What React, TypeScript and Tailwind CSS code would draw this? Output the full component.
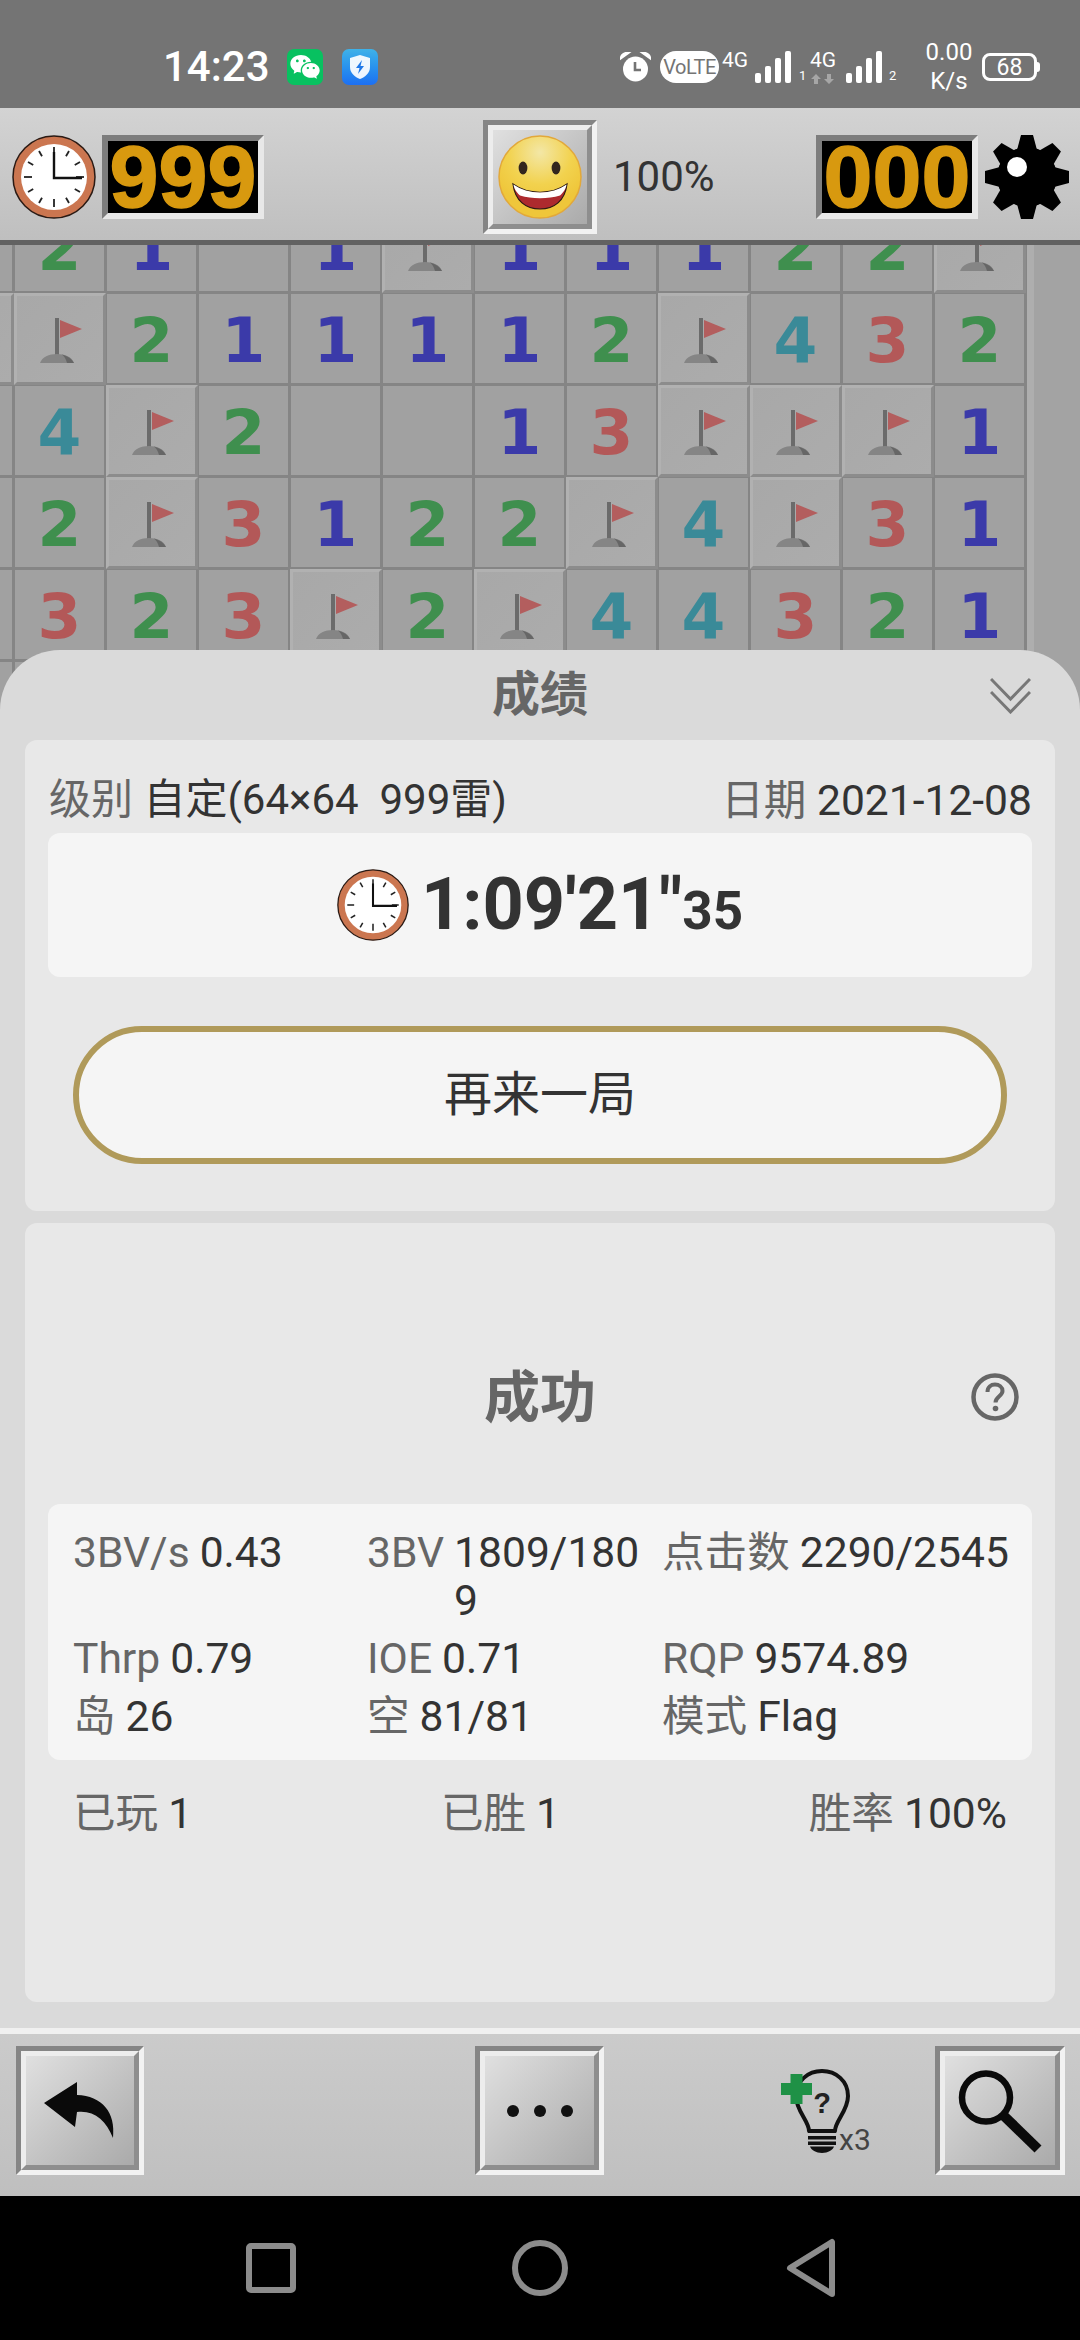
import React from 'react';
import { RiWechatFill } from 'react-icons/ri';

type Cell = number | 'F' | 'R' | '';

const FONT = "font-[family-name:Roboto,'Noto_Sans_CJK_SC',sans-serif]";

const BOARD: Cell[][] = [
  ['', 2, 1, '', 1, 'F', 1, 1, 1, 2, 2, 'F'],
  ['R', 'F', 2, 1, 1, 1, 1, 2, 'F', 4, 3, 2],
  ['', 4, 'F', 2, '', '', 1, 3, 'F', 'F', 'F', 1],
  ['', 2, 'F', 3, 1, 2, 2, 'F', 4, 'F', 3, 1],
  ['', 3, 2, 3, 'F', 2, 'F', 4, 4, 3, 2, 1],
  ['', '', '', '', '', '', '', '', '', '', '', ''],
];

const NUM_COLORS: Record<number, string> = {
  1: 'text-[#3b3aa9]',
  2: 'text-[#3f8f4e]',
  3: 'text-[#b35858]',
  4: 'text-[#3a8a98]',
};

const ClockIcon: React.FC<{ size: number }> = ({ size }) => (
  <svg width={size} height={size} viewBox="0 0 84 84" className="shrink-0">
    <circle cx="42" cy="42" r="41" fill="#cb7650" stroke="#2a1a14" strokeWidth="1.5" />
    <circle cx="42" cy="42" r="33" fill="#fff" />
    {Array.from({ length: 12 }).map((_, i) => (
      <line
        key={i}
        x1="42"
        y1="12"
        x2="42"
        y2={i % 3 === 0 ? 20 : 18}
        stroke="#222"
        strokeWidth="1.8"
        transform={`rotate(${i * 30} 42 42)`}
      />
    ))}
    <path d="M42 17V43H70" fill="none" stroke="#111" strokeWidth="2.4" />
  </svg>
);

const Smiley = () => (
  <svg width="84" height="84" viewBox="0 0 84 84">
    <defs>
      <radialGradient id="face" cx="50%" cy="20%" r="65%">
        <stop offset="0%" stopColor="#f3e7a6" />
        <stop offset="60%" stopColor="#f2d24e" />
        <stop offset="100%" stopColor="#efc63a" />
      </radialGradient>
    </defs>
    <circle cx="42" cy="42" r="41" fill="url(#face)" stroke="#e2a83a" strokeWidth="1.5" />
    <ellipse cx="25" cy="33" rx="4.4" ry="6.5" fill="#33261e" />
    <ellipse cx="58" cy="33" rx="4.4" ry="6.5" fill="#33261e" />
    <path d="M15 49C30 60 54 60 69 49C67 66 56 74 42 74C28 74 17 66 15 49Z" fill="#ad2a2e" stroke="#2a1a14" strokeWidth="1.2" />
    <path d="M15.500 49.500C30 60 54 60 68.500 49.500C68 54 65 58 62 60.500C50 64 34 64 22 60.500C19 58 16 54 15.500 49.500Z" fill="#fff" />
  </svg>
);

const Gear = () => (
  <svg width="86" height="84" viewBox="0 0 86 84" className="shrink-0">
    {[0, 45, 90, 135, 180, 225, 270, 315].map((a) => (
      <polygon key={a} points="37,0 49,0 53,15 33,15" fill="#000" transform={`rotate(${a} 43 42)`} />
    ))}
    <circle cx="43" cy="42" r="30" fill="#000" />
    <circle cx="33" cy="32" r="10" fill="#fff" />
  </svg>
);

const Flag = () => (
  <svg width="89" height="89" viewBox="0 0 89 89" className="block">
    <rect x="40" y="24" width="4" height="38" fill="#6b6b6b" />
    <polygon points="45,26 67,35 45,44" fill="#b35e5e" />
    <path d="M25 69C27 63 34 60 42 60C50 60 57 63 59 69Z" fill="#858585" />
    <path d="M47 60.5C53 62 57 65 59 69H52C51 65 49 62 47 60.5Z" fill="#666" />
  </svg>
);

const BoardCell: React.FC<{ value: Cell }> = ({ value }) => {
  if (value === 'F' || value === 'R') {
    return (
      <div className="w-[92px] h-[92px] -m-[1.5px] bg-gradient-to-br from-[#a8a8a8] to-[#acacac] border-[3px] border-t-[#b1b1b1] border-l-[#b1b1b1] border-r-[#8c8c8c] border-b-[#8c8c8c]">
        <div className="-m-[1.5px]">{value === 'F' && <Flag />}</div>
      </div>
    );
  }
  return (
    <div className="w-[89px] h-[89px] bg-[#a1a1a1] flex items-center justify-center">
      {value !== '' && (
        <span className={`font-[family-name:'DejaVu_Sans',sans-serif] font-bold text-[63px] leading-none translate-y-[2px] ${NUM_COLORS[value]}`}>
          {value}
        </span>
      )}
    </div>
  );
};

const RaisedButton: React.FC<{ className: string; children: React.ReactNode }> = ({ className, children }) => (
  <div className={`shrink-0 border-[5px] border-t-[#858585] border-l-[#858585] border-r-[#f2f2f2] border-b-[#f2f2f2] ${className}`}>
    <div className="w-full h-full border-[5px] border-t-[#ededed] border-l-[#ededed] border-r-[#8e8e8e] border-b-[#8e8e8e] bg-gradient-to-br from-[#e0e0e0] to-[#aaaaaa] flex items-center justify-center">
      {children}
    </div>
  </div>
);

const Counter: React.FC<{ text: string }> = ({ text }) => (
  <div className="w-[162px] h-[84px] shrink-0 border-[6px] border-t-[#7d7d7d] border-l-[#7d7d7d] border-r-[#e8e8e8] border-b-[#e8e8e8] bg-black flex items-center justify-center">
    <span className="font-[family-name:'Liberation_Sans',sans-serif] font-bold text-[88px] leading-none text-[#d8990f] [-webkit-text-stroke:1.5px_#d8990f]">
      {text}
    </span>
  </div>
);

const Bars = () => (
  <svg width="37" height="32" viewBox="0 0 37 32" fill="#fff">
    <rect x="0" y="22" width="6" height="10" rx="2" />
    <rect x="10" y="15" width="6" height="17" rx="2" />
    <rect x="20" y="7" width="6" height="25" rx="2" />
    <rect x="30" y="0" width="6" height="32" rx="2" />
  </svg>
);

const StatusBar = () => (
  <div className={`h-[108px] shrink-0 bg-[#747474] flex items-center pl-[163px] pt-[26px] text-white ${FONT}`}>
    <span className="text-[42px] font-medium leading-none w-[104px]">14:23</span>
    <div className="ml-[20px] w-[36px] h-[36px] rounded-[7px] bg-[#08c160] flex items-center justify-center">
      <RiWechatFill size={32} color="#fff" />
    </div>
    <div className="ml-[19px] w-[36px] h-[36px] rounded-[7px] bg-gradient-to-b from-[#3fb2e8] to-[#1e6ff2] flex items-center justify-center">
      <svg width="22" height="26" viewBox="0 0 22 26">
        <path d="M11 1L21 4V13C21 19 16 23 11 25C6 23 1 19 1 13V4Z" fill="#fff" opacity="0.92" />
        <path d="M13 6L7 14H10.5L9 20L15 12H11.5Z" fill="#1e78e8" />
      </svg>
    </div>
    <svg width="31" height="30" viewBox="0 0 31 30" className="ml-[242px]">
      <circle cx="15.5" cy="17" r="12.5" fill="#fff" />
      <path d="M1 6C2 2 5 1 8 1ZM30 6C29 2 26 1 23 1Z" fill="#fff" stroke="#fff" strokeWidth="2.5" />
      <path d="M15 10V18H21" fill="none" stroke="#747474" strokeWidth="2.6" />
    </svg>
    <div className="ml-[9px] w-[59px] h-[32px] rounded-full bg-white flex items-center justify-center text-[#747474] text-[20px] leading-none tracking-[-0.5px]">
      VoLTE
    </div>
    <div className="ml-[3px] self-start mt-[50px] -translate-y-[26px] text-[21px] leading-none w-[30px]">4G</div>
    <div className="ml-[3px]"><Bars /></div>
    <span className="ml-[7px] self-end mb-[26px] text-[13px] leading-none w-[8px]">1</span>
    <div className="ml-[2px] w-[28px] flex flex-col items-center">
      <span className="text-[21px] leading-none">4G</span>
      <svg width="26" height="10" viewBox="0 0 26 10" fill="#a6a6a6" className="mt-[3px]">
        <path d="M6 0L11 5H8V10H4V5H1Z" />
        <path d="M19 10L14 5H17V0H21V5H24Z" />
      </svg>
    </div>
    <div className="ml-[9px]"><Bars /></div>
    <span className="ml-[6px] self-end mb-[26px] text-[13px] leading-none w-[8px]">2</span>
    <div className="ml-[27px] w-[50px] flex flex-col items-center text-[24px] leading-[29px]">
      <span>0.00</span>
      <span>K/s</span>
    </div>
    <div className="ml-[8px] relative w-[55px] h-[28px] rounded-[8px] border-[3px] border-white flex items-center justify-center text-[23px] leading-none">
      68
      <div className="absolute -right-[6px] top-[6px] w-[3px] h-[10px] bg-white rounded-r" />
    </div>
  </div>
);

const TopBar = () => (
  <div className={`h-[137px] shrink-0 border-b-[5px] border-[#626262] bg-gradient-to-b from-[#d3d3d3] to-[#bfbfbf] flex items-center pt-[6px] pl-[12px] pr-[10px] ${FONT}`}>
    <ClockIcon size={84} />
    <div className="ml-[6px]"><Counter text="999" /></div>
    <RaisedButton className="ml-[219px] w-[114px] h-[114px]">
      <Smiley />
    </RaisedButton>
    <span className="ml-[16px] text-[42px] leading-none text-[#333]">100%</span>
    <div className="ml-auto flex items-center gap-[6px]">
      <Counter text="000" />
      <Gear />
    </div>
  </div>
);

const Board = () => (
  <div className="h-[465px] shrink-0 overflow-hidden bg-[#a3a3a3] relative">
    <div className="w-[1101px] -mt-[43px] -ml-[77px] bg-[#858585] grid grid-cols-[repeat(12,89px)] gap-[3px] pr-[3px] box-content">
      {BOARD.flat().map((v, i) => (
        <BoardCell key={i} value={v} />
      ))}
    </div>
    <div className="absolute top-0 left-[1027px] w-[7px] h-full bg-[#aeaeae]" />
  </div>
);

const Stat: React.FC<{ label: string; value: string; wrap?: boolean }> = ({ label, value, wrap }) => (
  <div className="flex gap-[10px] leading-[48px]">
    <span className="text-[#666] shrink-0">{label}</span>
    <span className={`text-[#333] ${wrap ? 'break-all' : 'whitespace-nowrap'}`}>{value}</span>
  </div>
);

const Sheet = () => (
  <div className={`relative -mt-[60px] h-[1378px] shrink-0 rounded-t-[60px] bg-[#dadada] px-[25px] ${FONT}`}>
    <div className="h-[90px] relative flex items-center justify-center">
      <span className="text-[48px] font-bold text-[#666] leading-none">成绩</span>
      <svg width="41" height="37" viewBox="0 0 41 37" fill="none" stroke="#777" strokeWidth="3" className="absolute right-[24px] top-[27px]">
        <path d="M1 2L20.5 22L40 2" />
        <path d="M1 15L20.5 35L40 15" />
      </svg>
    </div>

    <div className="h-[471px] rounded-[12px] bg-[#e8e8e8] px-[23px] pt-[30px]">
      <div className="flex justify-between h-[63px] leading-[60px] whitespace-pre">
        <div className="pl-[1px] text-[42px]">
          <span className="text-[#666]">级别 </span>
          <span className="text-[#333]">自定(64×64  999雷)</span>
        </div>
        <div className="text-[42.6px]">
          <span className="text-[#666]">日期 </span>
          <span className="text-[#333]">2021-12-08</span>
        </div>
      </div>
      <div className="h-[144px] rounded-[12px] bg-[#f5f5f5] flex items-center justify-center gap-[12px]">
        <ClockIcon size={72} />
        <div className="font-bold text-[#333] leading-none flex items-baseline">
          <span className="text-[72px]">1:09'21"</span>
          <span className="text-[53px]">35</span>
        </div>
      </div>
      <div className="mt-[49px] mx-[25px] h-[138px] rounded-full border-[6px] border-[#b09a5a] bg-[#f5f5f5] flex items-center justify-center text-[48px] text-[#333]">
        再来一局
      </div>
    </div>

    <div className="mt-[12px] h-[779px] rounded-[12px] bg-[#e8e8e8] px-[23px] pt-[135px]">
      <div className="h-[80px] relative flex items-center justify-center">
        <span className="text-[56px] font-bold text-[#666] leading-none">成功</span>
        <svg width="48" height="48" viewBox="0 0 48 48" className="absolute right-[13px] top-[15px]">
          <circle cx="24" cy="24" r="21.5" fill="none" stroke="#666" strokeWidth="4.5" />
          <path d="M16.5 19C16.5 14 20 11.5 24 11.5C28 11.5 31.5 14 31.5 18C31.5 23 24.5 23.5 24.5 29.5" fill="none" stroke="#666" strokeWidth="4" />
          <circle cx="24.5" cy="35.5" r="2.8" fill="#666" />
        </svg>
      </div>

      <div className="mt-[66px] h-[256px] rounded-[12px] bg-[#f5f5f5] px-[25px] pt-[24px] grid grid-cols-[279px_280px_1fr] gap-x-[15px] gap-y-[10px] content-start text-[42.6px]">
        <Stat label="3BV/s" value="0.43" />
        <Stat label="3BV" value="1809/1809" wrap />
        <Stat label="点击数" value="2290/2545" />
        <Stat label="Thrp" value="0.79" />
        <Stat label="IOE" value="0.71" />
        <Stat label="RQP" value="9574.89" />
        <Stat label="岛" value="26" />
        <Stat label="空" value="81/81" />
        <Stat label="模式" value="Flag" />
      </div>

      <div className="mt-[29px] px-[25px] flex justify-between text-[42.6px]">
        <Stat label="已玩" value="1" />
        <Stat label="已胜" value="1" />
        <Stat label="胜率" value="100%" />
      </div>
    </div>
  </div>
);

const BottomBar = () => (
  <div className={`h-[168px] shrink-0 border-t-[6px] border-[#f0f0f0] bg-gradient-to-b from-[#cbcbcb] to-[#bfbfbf] flex items-center pb-[9px] pl-[16px] ${FONT}`}>
    <RaisedButton className="w-[128px] h-[129px]">
      <svg width="72" height="57" viewBox="0 0 72 57" fill="#0a0a0a">
        <path d="M33 0L0 21L31 45L33 30C50 28 62 38 69 56C72 30 58 14 33 13Z" />
      </svg>
    </RaisedButton>
    <RaisedButton className="ml-[331px] w-[129px] h-[129px]">
      <div className="flex gap-[15px]">
        <div className="w-[12px] h-[12px] rounded-full bg-[#111]" />
        <div className="w-[12px] h-[12px] rounded-full bg-[#111]" />
        <div className="w-[12px] h-[12px] rounded-full bg-[#111]" />
      </div>
    </RaisedButton>
    <div className="ml-[176px] relative w-[92px] h-[84px] shrink-0">
      <svg width="70" height="84" viewBox="0 0 70 84">
        <path d="M29 62C29 52 16 42 16 27C16 12 28 2 42 2C56 2 68 12 68 27C68 42 55 52 55 62Z" fill="none" stroke="#111" strokeWidth="4" strokeLinejoin="round" />
        <rect x="28" y="60" width="28" height="4" fill="#111" />
        <rect x="28" y="67" width="28" height="3.5" fill="#111" />
        <rect x="28" y="72.5" width="28" height="3.5" fill="#111" />
        <path d="M30 77.500H54C53 81 48 84 42 84C36 84 31 81 30 77.500Z" fill="#111" />
        <text x="42" y="44" textAnchor="middle" fontFamily="'Liberation Sans',sans-serif" fontWeight="700" fontSize="29" fill="#222">?</text>
        <path d="M10.500 5H22.500V14H32V26H22.500V35H10.500V26H1V14H10.500Z" fill="#1f9146" />
      </svg>
      <span className="absolute left-[59px] top-[56px] text-[30px] leading-none text-[#444]">x3</span>
    </div>
    <RaisedButton className="ml-[63px] w-[130px] h-[129px]">
      <svg width="84" height="84" viewBox="0 0 84 84" fill="none" stroke="#0a0a0a">
        <circle cx="28" cy="28.500" r="24" strokeWidth="6.500" />
        <path d="M46 47L80 80" strokeWidth="10" />
      </svg>
    </RaisedButton>
  </div>
);

const NavBar = () => (
  <div className="flex-1 bg-black relative">
    <svg width="1080" height="144" viewBox="0 0 1080 144" fill="none" stroke="#8c8c8c" strokeWidth="6">
      <rect x="249" y="50" width="44" height="44" rx="2" />
      <circle cx="540" cy="72" r="25" />
      <path d="M832 46V98L790 72Z" strokeLinejoin="round" />
    </svg>
  </div>
);

const App: React.FC = () => {
  return (
    <div className="w-[1080px] h-[2340px] overflow-hidden flex flex-col bg-black">
      <StatusBar />
      <TopBar />
      <Board />
      <Sheet />
      <BottomBar />
      <NavBar />
    </div>
  );
};

export default App;
